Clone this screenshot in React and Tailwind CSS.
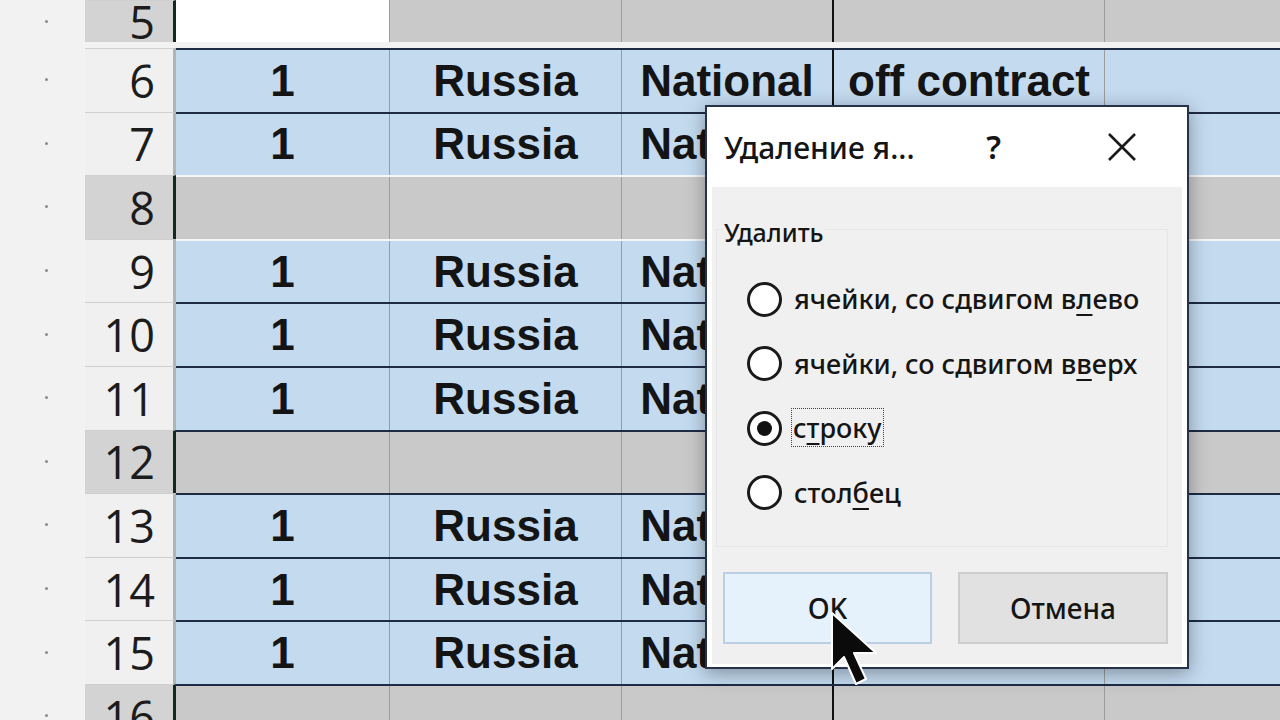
import React from 'react';

const rows = [
    { n: 5, sel: true, line: 'none', first: true },
    { n: 6, line: 'dark' },
    { n: 7, line: 'dark' },
    { n: 8, sel: true, line: 'white' },
    { n: 9, line: 'white' },
    { n: 10, line: 'dark' },
    { n: 11, line: 'dark' },
    { n: 12, sel: true, line: 'dark' },
    { n: 13, line: 'dark' },
    { n: 14, line: 'dark' },
    { n: 15, line: 'dark' },
    { n: 16, sel: true, line: 'dark' },
];

const lineClass = {
    none: 'border-t-0',
    dark: 'border-t-2 border-t-[#1d2b45]',
    white: 'border-t-2 border-t-[#f4f6f8]',
};

function Row({ row }) {
    const fill = row.sel ? 'bg-[#c9c9c9]' : 'bg-[#c3daef]';
    const height = row.first ? 'h-[48px] pb-[6px]' : 'h-[63.6px]';
    return (
        <div className={`flex shrink-0 ${height}`}>
            {/* outline gutter */}
            <div className="w-[85px] flex items-center pl-[45px] bg-[#f2f2f2]">
                <div className="w-[3px] h-[3px] rounded-full bg-[#8a8a8a]" />
            </div>
            {/* row header */}
            <div
                className={`w-[91px] flex items-center justify-end pr-[18px] border-t border-t-[#cfcfcf] border-r-[3px] ${row.sel ? 'bg-[#d3d3d3] border-r-[#122a1c]' : 'bg-[#f0f0f0] border-r-[#aeb4b8]'
                    }`}
            >
                <span className="text-[45px] leading-none text-[#1c1c1c] font-['Open_Sans',sans-serif]">{row.n}</span>
            </div>
            {/* cells */}
            <div className={`flex flex-1 ${lineClass[row.line]} font-['Liberation_Sans',Arial,sans-serif] font-bold text-[44px] text-[#141414]`}>
                <div className={`w-[214px] flex items-center justify-center border-r-[1.5px] border-r-[#9c9c9c] ${row.first ? 'bg-white' : fill}`}>
                    {!row.sel && '1'}
                </div>
                <div className={`w-[232px] flex items-center justify-center border-r-[1.5px] border-r-[#9c9c9c] ${fill}`}>
                    {!row.sel && 'Russia'}
                </div>
                <div className={`w-[212px] flex items-center justify-center border-r-2 border-r-[#111] ${fill}`}>
                    {!row.sel && 'National'}
                </div>
                <div className={`w-[271px] flex items-center justify-center border-r-[1.5px] border-r-[#9c9c9c] ${fill}`}>
                    {!row.sel && 'off contract'}
                </div>
                <div className={`flex-1 ${fill}`} />
            </div>
        </div>
    );
}

function Radio({ checked, children }) {
    return (
        <div className="flex items-center h-[64.5px]">
            <div className="w-[35px] h-[35px] rounded-full border-[3px] border-[#1a1a1a] bg-white flex items-center justify-center shrink-0">
                {checked && <div className="w-[15px] h-[15px] rounded-full bg-[#111]" />}
            </div>
            <div className="ml-[12px]">{children}</div>
        </div>
    );
}

function Cursor() {
    return (
        <svg className="absolute left-[830px] top-[611px] z-20" width="52" height="80" viewBox="0 0 52 80">
            <path
                d="M2 2 L2 58 L14 46 L26 73 L36 68 L24 42 L46 42 Z"
                fill="#0b0b0b"
                stroke="#ffffff"
                strokeWidth="2"
                strokeLinejoin="round"
            />
        </svg>
    );
}

function DeleteDialog() {
    return (
        <div className="absolute left-[705px] top-[105px] w-[484px] h-[564px] z-10 flex flex-col bg-white border-2 border-[#25324a] shadow-[0_4px_18px_rgba(0,0,0,0.35)] font-['Noto_Sans','Open_Sans',sans-serif] font-medium text-[#151515]">
            {/* title bar */}
            <div className="h-[80px] flex items-center pl-[17px] pr-[50px] shrink-0">
                <span className="text-[30px] flex-1">Удаление я...</span>
                <span className="text-[32px] font-semibold mr-[106px]">?</span>
                <svg width="30" height="30" viewBox="0 0 30 30">
                    <path d="M2 2 L28 28 M28 2 L2 28" stroke="#1a1a1a" strokeWidth="2.6" />
                </svg>
            </div>
            {/* body */}
            <div className="flex-1 mx-[5px] mb-[3px] bg-[#f0f0f0] flex flex-col text-[27px]">
                <div className="mt-[42px] ml-[4px] mr-[14px] border border-[#e6e6e6] h-[318px]">
                    <div className="-mt-[16px] ml-[6px] w-fit px-[1px] bg-[#f0f0f0] leading-[36px] text-[25px]">Удалить</div>
                    <div className="ml-[30px] mt-[17px]">
                        <Radio>
                            ячейки, со сдвигом в<u className="underline-offset-[5px]">л</u>ево
                        </Radio>
                        <Radio>
                            ячейки, со сдвигом в<u className="underline-offset-[5px]">в</u>ерх
                        </Radio>
                        <Radio checked>
                            <span className="outline-1 outline-dotted outline-[#444] px-[1px] -ml-[2px]">
                                с<u className="underline-offset-[5px]">т</u>року
                            </span>
                        </Radio>
                        <Radio>
                            стол<u className="underline-offset-[5px]">б</u>ец
                        </Radio>
                    </div>
                </div>
                <div className="flex gap-[26px] ml-[11px] mt-[25px] text-[28px]">
                    <div className="w-[209px] h-[72px] flex items-center justify-center bg-[#e5f1fb] border-2 border-[#bccfe2]">
                        OK
                    </div>
                    <div className="w-[210px] h-[72px] flex items-center justify-center bg-[#e1e1e1] border-2 border-[#cdcdcd]">
                        Отмена
                    </div>
                </div>
            </div>
        </div>
    );
}

export default function App() {
    return (
        <div className="relative w-[1280px] h-[720px] overflow-hidden bg-[#f2f2f2]">
            <div className="flex flex-col">
                {rows.map((row) => (
                    <Row key={row.n} row={row} />
                ))}
            </div>
            <DeleteDialog />
            <Cursor />
        </div>
    );
}
